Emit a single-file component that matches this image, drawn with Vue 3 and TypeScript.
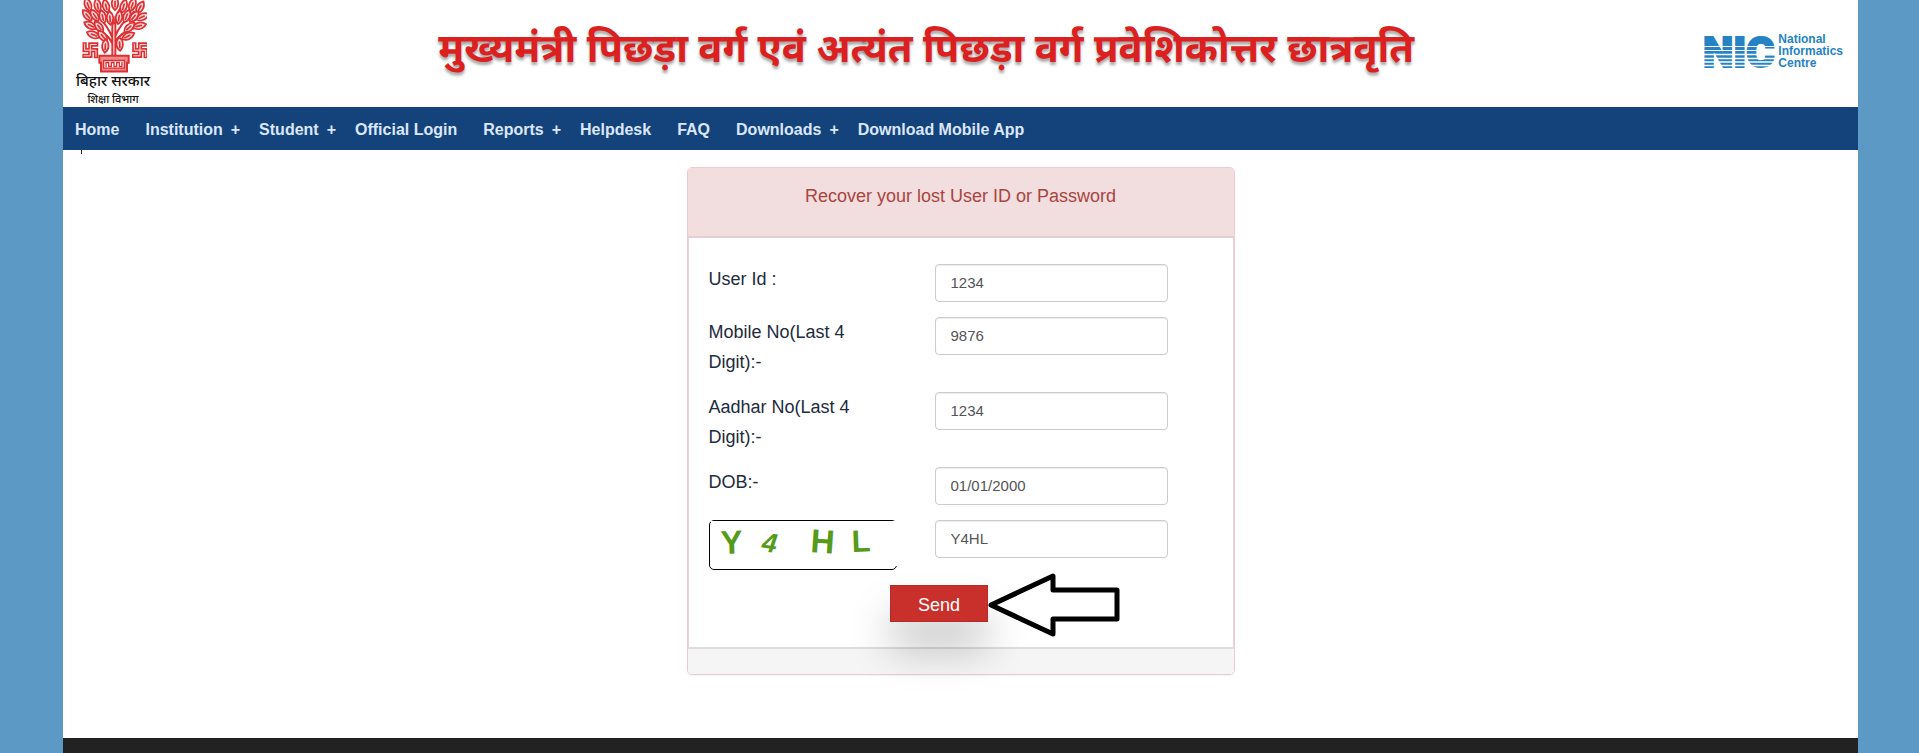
<script setup lang="ts">
import { reactive } from 'vue'

interface NavItem {
  label: string
  hasMenu?: boolean
}

interface Field {
  id: string
  label: string
  value: string
}

interface Leaf {
  x: number
  y: number
  angle: number
}

const navItems: NavItem[] = [
  { label: 'Home' },
  { label: 'Institution', hasMenu: true },
  { label: 'Student', hasMenu: true },
  { label: 'Official Login' },
  { label: 'Reports', hasMenu: true },
  { label: 'Helpdesk' },
  { label: 'FAQ' },
  { label: 'Downloads', hasMenu: true },
  { label: 'Download Mobile App' },
]

const fields = reactive<Field[]>([
  { id: 'user-id', label: 'User Id :', value: '1234' },
  { id: 'mobile', label: 'Mobile No(Last 4 Digit):-', value: '9876' },
  { id: 'aadhar', label: 'Aadhar No(Last 4 Digit):-', value: '1234' },
  { id: 'dob', label: 'DOB:-', value: '01/01/2000' },
])

const captcha = reactive({ value: 'Y4HL' })

const leaves: Leaf[] = [
  { x: 195, y: 10, angle: 0 },
  { x: 168, y: 18, angle: -14 },
  { x: 221, y: 18, angle: 16 },
  { x: 143, y: 16, angle: -10 },
  { x: 247, y: 14, angle: 20 },
  { x: 114, y: 14, angle: -20 },
  { x: 270, y: 22, angle: 30 },
  { x: 134, y: 46, angle: -34 },
  { x: 158, y: 50, angle: -14 },
  { x: 180, y: 54, angle: -4 },
  { x: 207, y: 52, angle: 8 },
  { x: 230, y: 48, angle: 22 },
  { x: 112, y: 46, angle: -40 },
  { x: 277, y: 50, angle: 66 },
  { x: 252, y: 50, angle: 40 },
  { x: 121, y: 76, angle: -62 },
  { x: 147, y: 80, angle: -38 },
  { x: 268, y: 77, angle: 76 },
  { x: 238, y: 82, angle: 48 },
  { x: 130, y: 104, angle: -68 },
  { x: 158, y: 108, angle: -40 },
  { x: 234, y: 108, angle: 64 },
  { x: 166, y: 138, angle: 4 },
  { x: 209, y: 132, angle: -4 },
]
</script>

<template>
  <div class="page">
    <header class="masthead">
      <div class="state">
        <svg class="emblem" viewBox="87 0 204 218" role="img" aria-label="Bihar emblem">
          <g fill="none" stroke="#de2f33" stroke-linecap="round">
            <path stroke-width="6" d="M187 165V60M196 165V50M187 130C176 105 158 95 132 84M187 112C176 84 160 64 140 42M196 126C206 104 224 92 258 82M196 108C206 80 226 58 252 34M191 70C186 45 178 32 172 20M195 60C200 40 208 28 216 18" />
            <g v-for="(leaf, i) in leaves" :key="i" :transform="`translate(${leaf.x} ${leaf.y}) rotate(${leaf.angle})`">
              <path stroke-width="5" fill="#f9d6d6" d="M0-21C13-9 13 9 0 20C-13 9-13-9 0-21Z" />
              <path stroke-width="5" d="M0-6V10" />
            </g>
            <path stroke-width="6" d="M148 167H236V188H231V214H153V188H148Z" fill="#f08a8c" />
            <path stroke-width="4" d="M161 181H223V204H161Z" fill="#fff" />
            <path stroke-width="4" d="M168 200V187H176V199H184V187H192V199H200V187H208V199H216V187" />
            <g v-for="cx in [121, 270]" :key="cx" :transform="`translate(${cx} 150)`">
              <path stroke-width="13" stroke-linecap="butt" d="M-17-24V0H17V24M24-17H0V17H-24" />
              <path stroke="#fbdcdc" stroke-width="3" stroke-linecap="butt" d="M-17-20V0H17V20M20-17H0V17H-20" />
            </g>
          </g>
        </svg>
        <span class="state-name">बिहार सरकार</span>
        <span class="state-dept">शिक्षा विभाग</span>
      </div>

      <h1 class="title">मुख्यमंत्री पिछड़ा वर्ग एवं अत्यंत पिछड़ा वर्ग प्रवेशिकोत्तर छात्रवृति</h1>

      <div class="nic">
        <svg class="nic-mark" viewBox="0 0 74 60" aria-hidden="true">
          <text class="nic-letters" x="-1" y="46">NIC</text>
          <path stroke="#fff" stroke-width="1" d="M0 25.5H74M0 29.5H74" />
          <path stroke="#fff" stroke-width="1.4" d="M0 33.5H74M0 37.5H74M0 41H74M0 44.5H74" />
        </svg>
        <span class="nic-name">National<br />Informatics<br />Centre</span>
      </div>
    </header>

    <nav class="menu" aria-label="Main">
      <a v-for="item in navItems" :key="item.label" href="#" :class="{ parent: item.hasMenu }">
        {{ item.label }}<span v-if="item.hasMenu" class="plus">+</span>
      </a>
    </nav>

    <main class="content">
      <form class="panel" @submit.prevent>
        <h2 class="panel-head">Recover your lost User ID or Password</h2>
        <div class="panel-body">
          <div v-for="field in fields" :key="field.id" class="row">
            <label :for="field.id">{{ field.label }}</label>
            <input :id="field.id" v-model="field.value" type="text" />
          </div>
          <div class="row">
            <div class="captcha">
              <svg viewBox="0 0 186 45" role="img" aria-label="Captcha code">
                <text x="10" y="33" font-size="33" rotate="-2">Y</text>
                <text x="50" y="30" font-size="27" font-style="italic" rotate="8">4</text>
                <text x="99" y="31" font-size="33" rotate="4">H</text>
                <text x="141" y="31" font-size="31" rotate="-2">L</text>
              </svg>
            </div>
            <input v-model="captcha.value" type="text" aria-label="Captcha" />
          </div>
          <div class="actions">
            <button type="submit">Send</button>
            <svg class="arrow" viewBox="0 0 132 66" aria-hidden="true">
              <path d="M3 33L65 4V18H129V47H65V62Z" fill="#fff" stroke="#000" stroke-width="5" stroke-linejoin="round" />
            </svg>
          </div>
        </div>
        <div class="panel-foot"></div>
      </form>
    </main>

    <footer class="footer"></footer>
  </div>
</template>

<style>
body {
  margin: 0;
  background: #5c9ac5;
}
</style>

<style scoped>
.page {
  display: flex;
  flex-direction: column;
  min-height: 100vh;
  margin: 0 61px 0 63px;
  background: #fff;
  font-family: "Liberation Sans", Arial, sans-serif;
}

.masthead {
  display: flex;
  align-items: center;
  justify-content: space-between;
  height: 107px;
  padding: 0 15px;
}

.state {
  display: flex;
  flex-direction: column;
  align-items: center;
  align-self: flex-start;
  width: 70px;
  color: #111;
  font-family: "Noto Sans Devanagari", "Noto Sans", sans-serif;
  white-space: nowrap;
}

.emblem {
  width: 68px;
  height: 73px;
}

.state-name {
  font-size: 15px;
  font-weight: 500;
  line-height: 20px;
}

.state-dept {
  font-size: 11px;
  font-weight: 500;
  line-height: 14px;
}

.title {
  margin: 0;
  padding-bottom: 4px;
  color: #dc1f1f;
  font-family: "Noto Sans Devanagari", "Noto Sans", sans-serif;
  font-size: 40px;
  font-weight: 700;
  line-height: 56px;
  white-space: nowrap;
  text-shadow: 0 3px 3px rgba(0, 0, 0, 0.35);
}

.nic {
  display: flex;
  align-items: center;
  padding-bottom: 6px;
  color: #2583c4;
}

.nic-mark {
  width: 74px;
  height: 60px;
}

.nic-letters {
  fill: #2583c4;
  stroke: #2583c4;
  stroke-width: 2px;
  font-family: Roboto, sans-serif;
  font-size: 43px;
  font-weight: 900;
}

.nic-name {
  font-size: 12px;
  font-weight: 700;
  line-height: 12px;
}

.menu {
  position: relative;
  display: flex;
  height: 43px;
  background: #14427b;
}

.menu::after {
  content: "";
  position: absolute;
  top: 100%;
  left: 18px;
  width: 1px;
  height: 4px;
  background: #222;
}

.menu a {
  padding: 0 14px 0 12px;
  color: #dbe7fb;
  font-size: 16px;
  font-weight: 700;
  line-height: 45px;
  text-decoration: none;
  white-space: nowrap;
}

.menu a.parent {
  padding-right: 7px;
}

.plus {
  margin-left: 8px;
}

.content {
  flex: 1;
  padding: 17px 16px 63px;
}

.panel {
  max-width: 546px;
  margin: 0 auto;
  border: 1px solid #ebccd1;
  border-radius: 5px;
  box-shadow: 0 1px 1px rgba(0, 0, 0, 0.05);
}

.panel-head {
  height: 40px;
  margin: 0;
  padding: 13px 15px 15px;
  border-bottom: 2px solid #e6cdd2;
  border-radius: 4px 4px 0 0;
  background: #f2dede;
  color: #a94442;
  font-size: 18px;
  font-weight: 400;
  line-height: 30px;
  text-align: center;
}

.panel-body {
  display: flex;
  flex-direction: column;
  gap: 15px;
  padding: 26px 20px 25px;
  border: solid #ebd3d7;
  border-width: 0 1px;
}

.row {
  display: grid;
  grid-template-columns: 188fr 38fr 233fr 45fr;
  align-items: start;
}

.row label {
  color: #212b3c;
  font-size: 18px;
  line-height: 30px;
}

.row input {
  box-sizing: border-box;
  grid-column: 3;
  width: 100%;
  height: 38px;
  padding: 0 15px 2px;
  border: 1px solid #ccc;
  border-radius: 4px;
  background: #fff;
  box-shadow: inset 0 1px 1px rgba(0, 0, 0, 0.075);
  color: #555;
  font-family: inherit;
  font-size: 15px;
}

.captcha {
  position: relative;
  height: 48px;
  border: 1px solid #000;
  border-radius: 5px;
}

.captcha svg {
  position: absolute;
  top: 0;
  left: 1px;
  width: 100%;
  height: 45px;
  background: #fff;
  fill: #559a1b;
  font-weight: 700;
}

.actions {
  display: flex;
  justify-content: center;
  padding-right: 43px;
}

.actions button {
  z-index: 1;
  width: 98px;
  height: 37px;
  padding: 4px 0 0;
  border: 1px solid #b52b27;
  border-radius: 0;
  background: #c9302c;
  box-shadow: 0 28px 40px 0 rgba(0, 0, 0, 0.22);
  color: #fff;
  font-family: inherit;
  font-size: 18px;
}

.arrow {
  z-index: 2;
  width: 132px;
  height: 66px;
  margin: -13px -132px -16px 0;
}

.panel-foot {
  height: 25px;
  border-top: 2px solid #ddd;
  border-radius: 0 0 4px 4px;
  background: #f5f5f5;
}

.footer {
  height: 15px;
  background: #222;
}
</style>
